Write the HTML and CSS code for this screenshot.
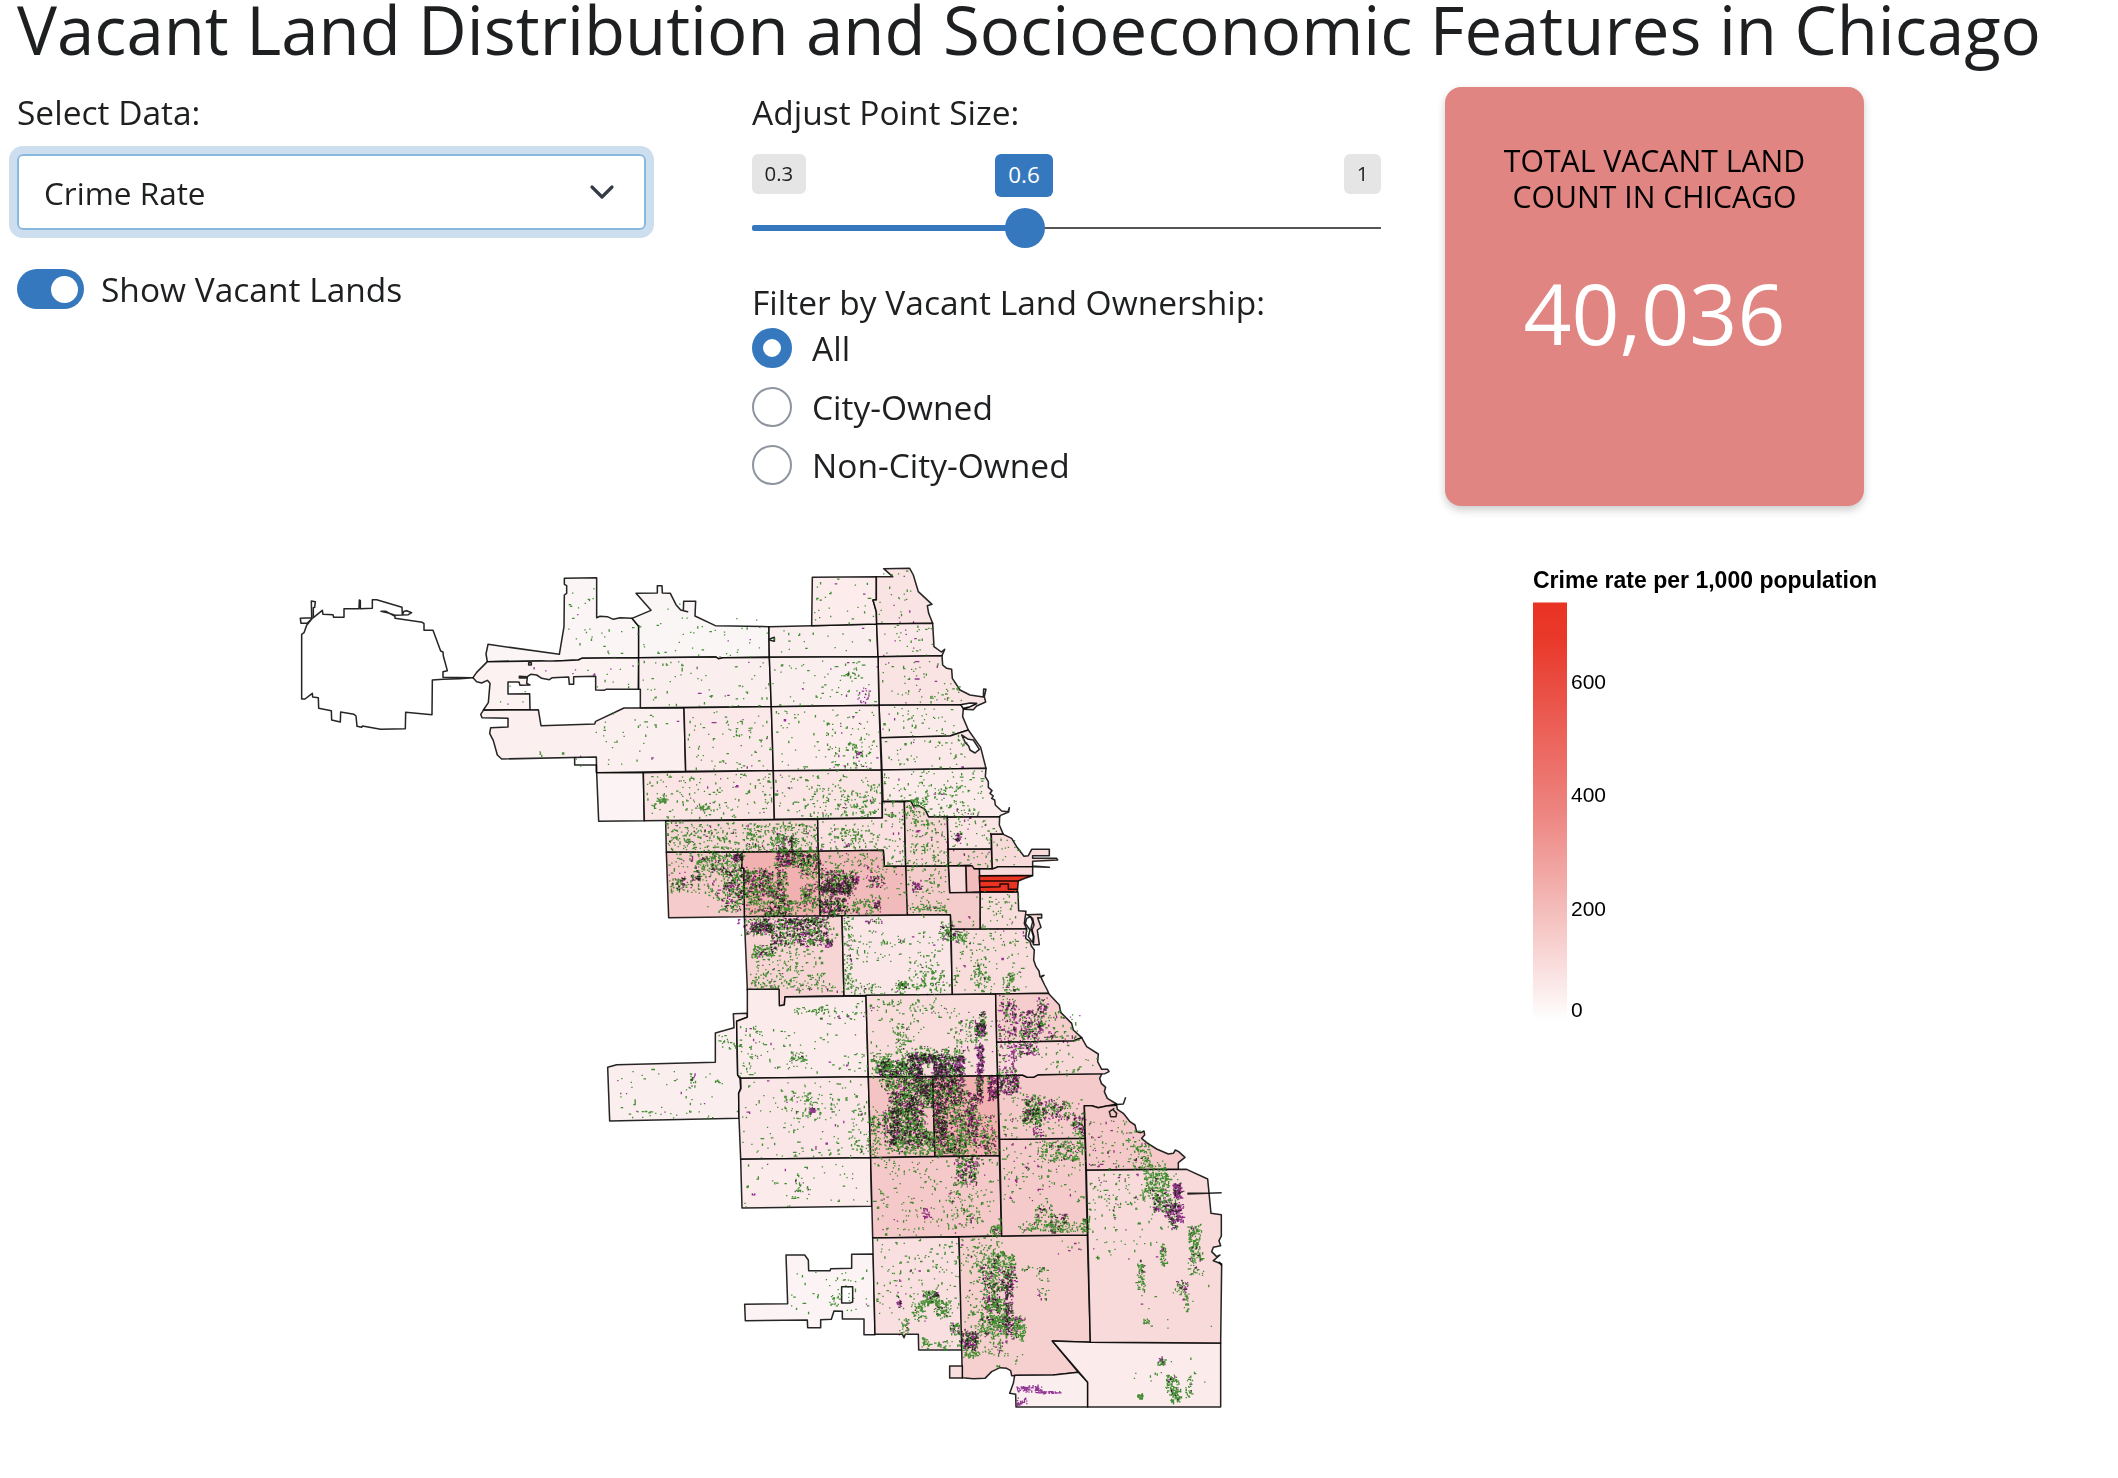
FILE: index.html
```html
<!DOCTYPE html>
<html lang="en">
<head>
<meta charset="utf-8">
<title>Vacant Land Distribution and Socioeconomic Features in Chicago</title>
<link rel="stylesheet" href="styles.css">
</head>
<body>
<h1 class="title">Vacant Land Distribution and Socioeconomic Features in Chicago</h1>
<section class="controls">
  <div class="column">
    <div class="label">Select Data:</div>
    <div class="select"><span>Crime Rate</span>
      <svg class="chevron" width="26" height="18" viewBox="0 0 26 18"><path d="M3 4l10 10L23 4"/></svg>
    </div>
    <div class="toggle-row"><span class="toggle"><span class="knob"></span></span><span>Show Vacant Lands</span></div>
  </div>
  <div class="column">
    <div class="label">Adjust Point Size:</div>
    <div class="slider">
      <div class="marks"><span class="mark">0.3</span><span class="mark">1</span><span class="mark current">0.6</span></div>
      <div class="track"><span class="filled"></span><span class="handle"></span></div>
    </div>
    <div class="filter-label">Filter by Vacant Land Ownership:</div>
    <div class="radios">
      <div class="option"><span class="radio checked"></span>All</div>
      <div class="option"><span class="radio"></span>City-Owned</div>
      <div class="option"><span class="radio"></span>Non-City-Owned</div>
    </div>
  </div>
  <div class="card">
    <div class="card-label">TOTAL VACANT LAND<br>COUNT IN CHICAGO</div>
    <div class="card-value">40,036</div>
  </div>
</section>
<section class="charts">
<svg class="map" width="960" height="870" viewBox="0 0 2880 2610">
<g class="areas">
<path fill="#fff" d="M100 203L127 181 129 193 159 194 161 202 192 202 192 176 237 176 238 150 241 152 241 176 277 175 277 149 290 149 366 172 367 194 372 184 380 182 395 188 385 194 345 196 325 189 303 184 318 184 345 199 345 205 427 217 432 221 432 241 459 241 482 303 489 306 490 318 502 362 489 365 489 382 579 383 540 386 489 388 457 390 456 494 377 487 376 536 302 538 247 528 245 532 231 529 228 498 222 493 182 486 181 516 155 510 154 482 116 475 115 443 98 441 97 430 75 447 65 447 65 253 72 248 80 226 97 205 82 219 63 220 61 205 95 203 94 153 106 155 104 172 100 173z"/>
<path fill="#fcf5f5" d="M853 85L950 83 950 203 960 199 982 200 1000 208 1020 203 1056 205 1076 229 1076 323 905 325 895 330 830 333 810 337 785 333 622 335 618 312 624 283 838 313 852 230 853 135 860 130 860 107 853 103z"/>
<path fill="#fcf2f2" d="M622 335L785 333 830 333 895 330 905 325 1076 323 1075 418 978 418 972 421 947 420 947 379 881 380 881 403 868 403 866 381 817 383 808 389 785 385 770 375 752 373 742 380 718 379 718 384 742 383 740 400 750 405 720 406 717 396 684 396 684 432 749 431 750 479 610 480 625 458 630 400 622 391 605 399 590 395 579 383 590 367z"/>
<path fill="#fcefef" d="M610 481L775 479 783 527 944 522 947 514 1032 474 1212 473 1217 664 950 668 949 621 665 627 652 615 640 572 629 550 632 533 684 531 684 505 606 503 602 493z"/>
<path fill="none" d="M884 622V645H949V668M746 338H754V345H746z"/>
<path fill="#fcf4f4" d="M950 668L1090 668 1093 812 956 814z"/>
</g>
<g class="areas" transform="translate(1080 0)">
<path fill="#fbf6f6" d="M-12 130L33 181-24 205-4 229-4 323 228 321 235 326 250 323 388 322 387 230 226 227 165 198 167 154 131 154 130 182 143 185 122 180 108 164 91 130 67 129 66 107 52 107 52 129z"/>
<path fill="#fbeeee" d="M387 230L516 227 710 222 714 320 388 322 387 270 403 274 403 262 387 268z"/>
<path fill="#fcecec" d="M517 82L709 80 709 150 699 150 709 185 710 222 515 227z"/>
<path fill="#fae3e3" d="M709 80L758 80 731 56 809 55 820 75 835 125 876 163 862 167 866 190 878 220 710 222 709 185 699 150 709 150z"/>
<path fill="#fbe9e9" d="M710 222L878 220 882 290 904 306 914 298 906 317 714 320z"/>
<path fill="#fae3e3" d="M714 320L906 317 908 345 920 355 935 358 937 385 960 420 990 435 1030 441 1031 417 1038 418 1033 440 1037 456 1010 468 1000 479 970 478 1008 462 962 464 717 466z"/>
<path fill="#fbeeee" d="M-4 323L228 321 235 326 250 323 388 322 394 470 1 473 1 418-4 418z"/>
<path fill="#fbeeee" d="M388 322L714 320 717 466 394 470z"/>
<path fill="#fbeaea" d="M717 466L962 464 970 475 968 500 985 540 930 558 722 563z"/>
<path fill="#fbe9e9" d="M722 563L930 558 985 540 1022 592 1038 655 726 660z"/>
<path fill="#fff" d="M965 555L985 568 1000 570 1018 598 1005 609 990 600 986 588 976 578z"/>
<path fill="#fff" d="M962 464L990 459 1010 460 990 470 970 475z"/>
<path fill="#fbe9e9" d="M132 473L394 470 400 662 137 664z"/>
<path fill="#fcecec" d="M394 470L717 466 724 660 400 662z"/>
<path fill="#fbe4e4" d="M10 668L400 662 403 808 13 812z"/>
<path fill="#fae4e4" d="M400 662L724 660 727 803 403 808z"/>
<path fill="#fbebeb" d="M726 660L1038 655 1036 680 1045 695 1045 712 1056 722 1050 730 1060 738 1055 745 1064 750 1066 765 1085 783 1104 785 1108 773 1106 786 1082 796 1077 801 865 801 855 780 835 768 820 768 812 753 729 754z"/>
</g>
<g class="areas" transform="translate(1080 720)">
<path fill="#f7d6d6" d="M77 93L533 88 535 184 79 187z"/>
<path fill="#fae0e0" d="M533 88L727 84 727 35 793 35 797 229 733 229 730 181 535 184z"/>
<path fill="#f7d6d6" d="M793 35L812 33 820 48 835 46 855 58 866 81 922 81 925 228 797 229z"/>
<path fill="#fbe4e4" d="M922 82L1079 80 1078 105 1090 133 1054 133 1054 177 925 178z"/>
<path fill="#f6d0d0" d="M925 178L1054 177 1057 236 1000 236 990 226 925 228z"/>
<path fill="#f8dada" d="M1054 133L1090 133 1115 145 1130 170 1152 199 1165 197 1175 178 1228 178 1228 197 1178 197 1178 205 1250 205 1253 210 1178 214 1178 228 1228 232 1178 230 1075 230 1057 238z"/>
<path fill="#f8dada" d="M1000 236L1057 237 1075 230 1178 230 1178 256 1018 257 1018 240z"/>
<path fill="#f8dada" d="M925 228L978 228 980 308 929 308z"/>
<path fill="#f3bcbc" d="M978 228L996 227 1003 237 1018 237 1020 306 980 308z"/>
<path fill="#e93323" d="M1018 258L1178 257 1155 265 1135 273 1132 306 1020 306z"/>
<path fill="none" d="M1018 273H1135M1020 292L1080 290 1080 282 1105 282 1105 298 1132 298"/>
<path fill="#f9dddd" d="M1020 307L1134 306 1136 362 1158 364 1153 400 1160 417 1020 418z"/>
<path fill="#f8dada" d="M1160 374L1205 373 1205 384 1193 383 1203 412 1192 420 1198 464 1180 464 1182 440 1176 420 1182 405 1178 385z"/>
<path fill="#f5cccc" d="M797 229L925 228 929 308 1020 307 1020 418 933 418 931 374 800 375z"/>
<path fill="#f2bbbb" d="M535 184L730 181 733 229 797 229 802 375 540 379z"/>
<path fill="#f1b1b1" d="M305 187L535 184 540 379 313 380 311 235 305 235z"/>
<path fill="#f5cbcb" d="M79 187L305 187 305 235 311 235 313 380 86 383z"/>
<path fill="#f7d5d5" d="M313 380L606 377 612 617 435 620 433 645 417 648 416 598 322 600z"/>
<path fill="#fae6e6" d="M606 377L931 374 937 614 612 617z"/>
<path fill="#f9dddd" d="M933 418L1160 417 1157 445 1170 455 1174 468 1183 480 1181 510 1188 530 1197 543 1200 560 1212 556 1203 562 1214 585 1222 600 1226 610 937 614z"/>
<path fill="#fff" d="M1160 385L1172 380 1178 395 1173 415 1180 440 1178 458 1165 440 1170 420 1156 400z"/>
</g>
<g class="areas" transform="translate(930 1290)">
<path fill="#fbeeee" d="M376 159L432 143 430 101 472 100 472 112 440 124 443 285 450 296 452 325 446 340 447 415 59 423 53 262 80 254 376 247z"/>
<path fill="#fbebeb" d="M472 28L567 28 568 77 583 75 585 51 828 48 835 290 452 295 443 285 440 124 472 112z"/>
<path fill="#fae6e6" d="M452 295L835 290 842 533 452 538 447 415 446 340 453 325z"/>
<path fill="#fbebeb" d="M452 538L842 533 845 679 456 684z"/>
<path fill="#fcf4f4" d="M588 825L644 825 655 840 656 872 720 872 722 866 785 865 785 823 850 822 855 1064 822 1064 822 1017 757 1017 757 994 732 993 724 1018 692 1019 692 1043 653 1043 652 1020 466 1022 464 973 593 971z"/>
<path fill="#fff" d="M755 920H788V966L780 969H755z"/>
</g>
<g class="areas" transform="translate(1680 1290)">
<path fill="#f9dddd" d="M78 46L467 42 473 287 85 291z"/>
<path fill="#f4c4c4" d="M85 291L278 290 285 529 92 533z"/>
<path fill="#f1b1b1" d="M278 290L473 287 478 527 285 529z"/>
<path fill="#f5c9c9" d="M92 533L478 527 485 768 98 774z"/>
<path fill="#f9dfdf" d="M98 774L357 771 367 1110 236 1110 235 1063 196 1063 192 1073 187 1063 105 1063z"/>
<path fill="#f6cfcf" d="M357 771L485 768 742 765 751 1087 637 1083 715 1177 670 1182 640 1185 515 1187 512 1172 500 1165 480 1163 455 1175 435 1195 400 1196 367 1193z"/>
<path fill="#f9dede" d="M329 1158H367V1194H329z"/>
<path fill="#fbeeee" d="M524 1186L640 1185 715 1177 743 1207 743 1281 528 1281 527 1243 509 1240 520 1210z"/>
<path fill="#fbebeb" d="M637 1083L751 1087 1142 1089 1142 1281 743 1281 743 1207z"/>
<path fill="#f8dada" d="M739 570L1040 568 1103 597 1113 700 1144 704 1144 768 1137 782 1142 797 1120 802 1115 815 1130 830 1140 825 1120 842 1145 852 1142 1089 751 1087z"/>
<path fill="none" d="M1042 642L1145 638M1042 640L1110 640M1136 845L1144 855 1140 848"/>
<path fill="#f5caca" d="M479 478L735 475 742 765 485 768z"/>
<path fill="#f5caca" d="M473 287L547 285 560 291 580 292 595 284 786 280 779 295 784 310 797 322 793 335 802 355 830 372 800 378 775 383 755 377 733 377 735 475 479 478z"/>
<path fill="#f5c9c9" d="M733 377L755 377 775 383 800 378 830 376 832 388 850 400 870 425 885 435 890 455 903 458 912 453 914 465 905 475 920 488 950 507 985 522 1000 520 1006 510 1016 515 1035 532 1015 548 1015 567 739 570z"/>
<path fill="none" d="M823 374L850 372 857 352M823 385L808 395 812 410 828 410 830 400 820 390"/>
<path fill="#f6cdcd" d="M467 42L625 40 658 75 662 97 695 130 700 150 725 173 700 183 470 187z"/>
<path fill="#f8d8d8" d="M470 187L700 183 725 173 740 200 775 222 773 245 785 268 803 268 807 275 795 281 595 284 580 292 560 291 547 285 473 287z"/>
</g>
<path id="private" class="private"/>
<path id="city" class="city"/>
</svg>
<svg class="legend" width="400" height="480" viewBox="0 0 400 480">
<defs><linearGradient id="scale" x1="0" y1="0" x2="0" y2="1">
<stop offset="0" stop-color="#e93323"/><stop offset=".09" stop-color="#e9392b"/><stop offset=".5" stop-color="#ed8480"/><stop offset=".75" stop-color="#f4c0be"/><stop offset=".92" stop-color="#fbeae9"/><stop offset="1" stop-color="#fff"/>
</linearGradient></defs>
<text class="legend-title" x="0" y="38" textLength="344">Crime rate per 1,000 population</text>
<rect x="0" y="52.500" width="34" height="418" fill="url(#scale)"/>
<text x="38" y="139">600</text><text x="38" y="252">400</text><text x="38" y="365.500">200</text><text x="38" y="467">0</text>
</svg>
</section>
<script src="points.js"></script>
</body>
</html>
```
FILE: styles.css
```css
* { box-sizing: border-box; }
body { margin: 0; background: #fff; color: #1d1f21; font-family: "Open Sans", "Noto Sans", sans-serif; font-size: 33.5px; overflow: hidden; }
.title { margin: 0 0 28px 17px; font-size: 67.1px; font-weight: 400; line-height: 59px; white-space: nowrap; }
.controls { display: grid; grid-template-columns: 629px 629px 419px; padding-left: 17px; height: 463px; align-items: start; }
.controls { column-gap: 106px; }
.column { display: flex; flex-direction: column; }
.label { height: 67px; line-height: 51px; }
.select { display: flex; align-items: center; justify-content: space-between; height: 76px; padding: 0 29px 0 25px; border: 2px solid #89b8de; border-radius: 6px; box-shadow: 0 0 0 8px #cddeee; font-size: 31.5px; }
.chevron { fill: none; stroke: #343a46; stroke-width: 3.2; stroke-linecap: round; stroke-linejoin: round; }
.toggle-row { display: flex; align-items: center; gap: 17px; margin-top: 34px; height: 50px; }
.toggle { display: flex; align-items: center; justify-content: flex-end; width: 67px; height: 40px; padding-right: 6px; border-radius: 20px; background: #3678bd; }
.knob { width: 27px; height: 27px; border-radius: 50%; background: #fff; }
.slider { height: 113px; }
.marks { position: relative; display: flex; justify-content: space-between; height: 54px; align-items: flex-start; }
.mark { height: 40px; padding: 0 12.500px; border-radius: 6px; background: #e5e5e5; font-size: 20.400px; line-height: 39px; }
.current { position: absolute; left: 243px; top: 0; width: 58px; height: 43px; padding: 0; text-align: center; background: #3678bd; color: #fff; font-size: 22.400px; line-height: 41px; }
.track { position: relative; display: flex; align-items: center; height: 40px; background: linear-gradient(#555, #555) center / 100% 2px no-repeat; }
.filled { width: 273px; height: 6px; border-radius: 2px; background: #3678bd; }
.handle { position: absolute; left: 253px; width: 40px; height: 40px; border-radius: 50%; background: #3678bd; }
.filter-label { margin-top: 10px; height: 51px; line-height: 51px; }
.radios { display: flex; flex-direction: column; gap: 18.600px; }
.option { display: flex; align-items: center; gap: 20px; height: 40px; }
.radio { width: 40px; height: 40px; border: 2px solid #8e959e; border-radius: 50%; }
.checked { border: 11px solid #3678bd; }
.card { width: 419px; height: 419px; margin-left: -42px; padding-top: 56px; border-radius: 16px; background: #e08581; box-shadow: 0 4px 8px rgba(0,0,0,.2); text-align: center; }
.card-label { color: #000; font-size: 30.2px; line-height: 36px; }
.card-value { margin-top: 40px; color: #fff; font-size: 84px; line-height: 116px; }
.charts { display: flex; padding-left: 280px; }
.map { flex: none; }
.legend { flex: none; margin-left: 293px; font: 21px "Liberation Sans", Arial, sans-serif; fill: #000; }
.legend-title { font-weight: 700; font-size: 23px; }
.areas { stroke: #000; stroke-width: 4.6; stroke-opacity: .85; stroke-linejoin: round; }
.city { fill: #8a2596; fill-opacity: .9; mix-blend-mode: multiply; }
.private { fill: #2f8420; fill-opacity: .9; }
```
FILE: points.js
```js
// Vacant lots as [x, y, width, height, count, city-owned share] blocks, grouped by map sheet origin.
const sheets = [
  { at: [0, 0], blocks: [
    [860,95,85,225,22,.05],[960,220,110,100,14,.1],[700,335,370,38,14,.2],[950,385,120,30,7,.1],[640,400,100,70,4,.1],
    [800,530,400,120,28,.1],[960,480,245,60,22,.1],[1095,670,380,140,80,.08],[1130,745,25,12,16,0],[770,595,20,20,5,0]] },
  { at: [1080, 0], blocks: [
    [0,150,120,165,16,.05],[120,200,265,120,30,.08],[400,230,305,85,26,.1],[520,85,185,135,36,.06],[715,60,110,155,28,.15],
    [720,225,155,90,34,.15],[5,330,380,140,80,.12],[395,325,315,140,80,.12],[650,410,35,45,22,.8],[610,355,60,30,22,.1],
    [725,325,180,135,60,.12],[905,400,60,50,20,.1],[725,470,230,90,60,.12],[730,565,270,90,70,.1],[140,475,250,185,85,.08],
    [235,510,90,50,22,.05],[400,475,315,185,130,.08],[570,590,130,65,60,.08],[15,670,385,135,130,.06],[50,740,30,14,22,0],
    [170,765,35,14,26,.1],[405,665,315,135,170,.08],[520,700,200,100,120,.06],[730,660,300,140,180,.04],[900,700,80,100,60,.03],
    [800,740,60,30,45,0],[645,600,22,20,20,.3]] },
  { at: [1080, 720], blocks: [
    [80,95,450,90,330,.06],[315,100,220,85,240,.1],[405,130,60,55,110,.2],[80,120,220,65,90,.05],[405,180,60,48,190,.65],
    [465,185,70,30,70,.35],[540,90,185,90,110,.08],[590,110,70,40,45,.06],[730,40,65,185,70,.15],[800,40,60,60,50,.03],
    [800,90,125,138,150,.06],[930,85,120,90,65,.1],[950,120,12,35,26,.9],[930,180,125,45,30,.1],[1060,140,75,80,18,.05],
    [85,190,220,120,260,.18],[170,190,135,60,190,.2],[250,240,60,115,220,.3],[275,190,30,20,60,.8],[155,255,25,15,30,.9],
    [105,260,30,40,36,.3],[200,300,110,60,70,.12],[312,238,100,84,480,.42],[412,230,28,110,120,.4],[475,190,60,70,160,.35],
    [480,280,52,50,100,.28],[320,330,215,12,120,.2],[370,345,75,32,130,.4],[312,340,220,38,120,.2],[540,185,190,60,100,.1],
    [540,240,95,75,400,.42],[545,280,90,25,150,.85],[635,255,20,25,50,.8],[540,325,80,50,260,.6],[640,320,65,50,70,.1],
    [680,255,50,40,60,.65],[700,335,20,20,30,.8],[560,190,235,180,75,.15],[805,235,115,130,100,.06],[815,272,30,28,40,.8],
    [800,345,110,20,40,.05],[935,320,80,90,8,.1],[1022,310,110,105,65,.04],[325,385,230,48,520,.48],[395,430,170,35,250,.5],
    [330,400,70,25,110,.75],[340,465,60,35,100,.15],[330,470,220,125,230,.04],[555,445,20,25,25,.8],[440,380,120,18,80,.5],
    [610,378,25,220,90,.06],[640,420,270,95,110,.1],[810,515,100,80,120,.08],[770,570,35,25,50,.08],[620,580,310,32,80,.06],
    [900,400,40,50,60,.4],[920,420,60,35,70,.1],[940,420,220,185,180,.08],[1000,500,40,95,55,.02],[1090,550,30,60,50,.05],
    [670,385,55,15,18,.7]] },
  { at: [930, 1290], blocks: [
    [475,0,130,25,30,.05],[620,0,200,40,65,.1],[600,80,110,20,35,0],[690,70,140,60,50,.1],[445,130,60,150,65,.05],
    [500,150,330,135,90,.08],[600,215,45,30,35,.1],[385,165,50,35,25,.04],[80,260,350,140,55,.1],[60,390,380,24,30,.05],
    [290,280,25,40,16,.5],[450,300,385,235,180,.06],[590,340,140,75,95,.08],[658,384,16,10,35,1],[780,380,55,150,70,.04],
    [460,540,380,140,55,.1],[610,600,50,55,35,.1],[600,870,240,130,55,.05],[715,940,35,35,20,.05]] },
  { at: [1680, 1290], blocks: [
    [85,55,260,40,70,.1],[85,60,380,220,140,.12],[160,135,50,70,55,.02],[340,115,90,95,110,.08],[405,125,32,42,120,.5],
    [410,190,18,98,150,.85],[415,95,18,35,35,.1],[90,215,60,70,120,.1],[120,242,80,45,300,.42],[200,222,48,66,300,.65],
    [248,222,30,25,100,.7],[278,225,28,62,200,.7],[306,228,34,60,170,.45],[340,225,30,65,180,.72],[180,200,190,30,100,.12],
    [125,292,60,35,100,.25],[185,292,95,45,330,.48],[280,292,90,75,480,.55],[150,335,95,60,420,.48],[130,390,115,65,550,.4],
    [248,330,30,50,110,.28],[140,450,140,40,370,.35],[145,485,130,35,160,.12],[88,390,30,130,90,.15],[280,365,38,110,330,.55],
    [318,368,65,105,240,.32],[285,470,95,55,300,.25],[380,345,30,125,220,.68],[408,290,20,75,110,.6],[443,288,30,68,170,.85],
    [410,400,55,40,40,.3],[390,450,80,70,160,.35],[345,530,35,85,125,.4],[385,530,30,80,90,.5],[100,535,375,230,260,.06],
    [250,680,20,30,25,.85],[330,620,80,120,100,.06],[450,730,30,40,50,.1],[475,45,50,240,210,.6],[515,60,12,260,90,.8],
    [540,90,65,65,180,.65],[535,155,60,70,150,.7],[590,50,30,50,45,.8],[600,100,110,80,110,.2],[475,285,60,55,180,.75],
    [600,190,160,85,45,.03],[545,345,55,90,200,.2],[600,360,85,55,140,.55],[550,385,50,18,60,.6],[695,400,35,65,100,.55],
    [480,350,250,120,120,.12],[580,440,25,30,20,.7],[595,480,135,60,190,.12],[485,485,250,180,170,.15],[580,670,55,75,90,.08],
    [630,700,55,55,110,.15],[540,725,190,30,85,.05],[725,715,20,40,40,.1],[745,420,150,145,110,.25],[880,480,50,90,90,.1],
    [745,580,280,110,170,.06],[910,550,75,100,220,.08],[940,650,50,45,100,.4],[1000,610,22,45,120,.85],[975,670,50,50,170,.8],
    [985,715,25,30,30,.5],[1045,735,35,50,70,.05],[1050,780,35,70,90,.03],[1040,840,50,45,30,.05],[960,790,18,65,50,.1],
    [890,840,22,90,65,.08],[1010,900,30,35,40,.45],[1030,935,15,55,22,0],[745,700,220,140,65,.04],[900,1015,25,15,14,0],
    [850,900,280,160,18,.1],[105,780,250,220,190,.04],[255,930,40,40,110,.12],[285,960,40,50,90,.06],[215,960,40,60,55,.05],
    [175,1010,30,50,30,.15],[170,960,12,20,20,.9],[330,1030,30,30,50,.15],[245,1070,20,35,25,.02],[290,1080,75,25,30,.1],
    [360,775,125,100,130,.03],[430,820,90,40,150,.04],[430,860,90,70,280,.35],[430,930,45,60,120,.3],[495,900,22,160,200,.75],
    [440,960,60,80,200,.1],[415,1010,85,50,160,.12],[365,1050,45,55,170,.7],[370,1100,40,30,50,.03],[520,1010,35,65,110,.15],
    [400,1060,100,60,80,.1],[540,860,80,10,22,.05],[590,875,35,85,30,.35],[560,780,170,40,12,.3],[430,1120,110,35,14,0],
    [375,880,55,160,65,.05],[950,1135,25,20,36,.4],[980,1185,35,50,75,.04],[990,1230,30,35,55,.02],[1035,1190,20,60,26,.02],
    [880,1130,220,110,22,.02],[893,1243,18,12,26,0],[530,1218,45,18,40,1],[585,1218,20,20,30,1],[600,1233,58,6,36,1],[530,1255,30,20,24,1]] }
];

let seed = 20417;
const random = () => {
  seed = (seed * 1664525 + 1013904223) >>> 0;
  return seed / 4294967296;
};
const paths = { city: [], private: [] };
for (const { at, blocks } of sheets) {
  for (const [x, y, w, h, count, share] of blocks) {
    // Small, dense blocks fade out past their edges and form short street-like runs.
    const soft = w * h < 16000 ? 0.16 : 0;
    const dense = count / (w * h) > 0.015;
    const total = count * (dense ? 1.4 : 1.12);
    const cityShare = share > 0.3 && share < 0.8 ? share * 0.85 : share;
    let lastX = 0, lastY = 0, own = 'private';
    for (let i = 0; i < total; i++) {
      if (i === 0 || random() > 0.36) {
        const blurX = (random() + random() - 1) * soft * w;
        const blurY = (random() + random() - 1) * soft * h;
        lastX = at[0] + x + random() * w + blurX;
        lastY = at[1] + y + random() * h + blurY;
        own = random() < cityShare ? 'city' : 'private';
      } else if (random() < 0.5) {
        lastX += 3.6 * (random() < 0.5 ? -1 : 1);
      } else {
        lastY += 3.6 * (random() < 0.5 ? -1 : 1);
      }
      paths[own].push(`M${lastX.toFixed(1)} ${lastY.toFixed(1)}h4v3.800h-4z`);
    }
  }
}
document.getElementById('city').setAttribute('d', paths.city.join(''));
document.getElementById('private').setAttribute('d', paths.private.join(''));
```
